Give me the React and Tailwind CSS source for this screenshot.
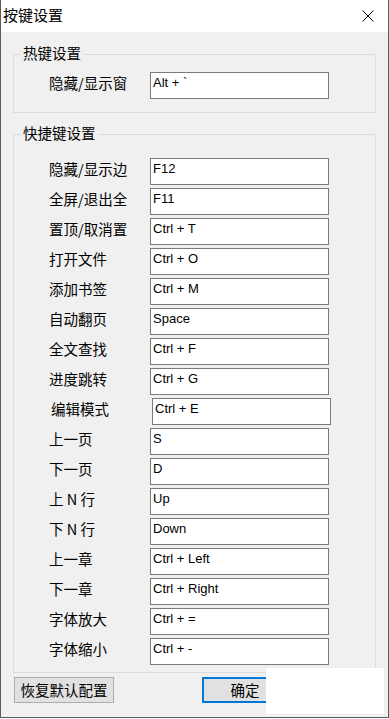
import React from "react";

const cjk = { fontFamily: '"Noto Sans CJK SC", "Noto Sans", sans-serif' };
const lat = { fontFamily: '"Liberation Sans", Arial, sans-serif' };

const rows = [
  ["隐藏/显示边", "F12"],
  ["全屏/退出全", "F11"],
  ["置顶/取消置", "Ctrl + T"],
  ["打开文件", "Ctrl + O"],
  ["添加书签", "Ctrl + M"],
  ["自动翻页", "Space"],
  ["全文查找", "Ctrl + F"],
  ["进度跳转", "Ctrl + G"],
  ["编辑模式", "Ctrl + E", true],
  ["上一页", "S"],
  ["下一页", "D"],
  ["上 N 行", "Up"],
  ["下 N 行", "Down"],
  ["上一章", "Ctrl + Left"],
  ["下一章", "Ctrl + Right"],
  ["字体放大", "Ctrl + ="],
  ["字体缩小", "Ctrl + -"],
];

function Row({ label, value, shift }) {
  return (
    <div className={`flex items-center h-[27px] ${shift ? "pl-[37px]" : "pl-[35px]"}`}>
      <div className="w-[101px] mb-[6px] text-[14.5px] leading-[20px] text-black whitespace-pre" style={cjk}>
        {label}
      </div>
      <div
        className="w-[179px] h-[27px] bg-white border border-[#7a7a7a] pl-[2px] pt-[2px] text-[13px] leading-[16px] text-black"
        style={lat}
      >
        {value}
      </div>
    </div>
  );
}

function Group({ title, children, className }) {
  return (
    <div className={`relative border border-[#dcdcdc] ${className}`}>
      <span
        className="absolute left-[7px] top-[-12px] px-[2px] bg-[#f0f0f0] text-[14.5px] leading-[20px] text-black"
        style={cjk}
      >
        {title}
      </span>
      {children}
    </div>
  );
}

export default function App() {
  return (
    <div className="w-[389px] h-[719px] bg-white relative overflow-hidden">
      <div className="h-[718px] border-x border-b border-[#5c5c5c] bg-[#f0f0f0] flex flex-col">
        <div className="h-[32px] bg-white flex items-center justify-between pl-[2px] pr-[14px]">
          <span className="text-[15px] leading-[20px] text-black mb-[2px]" style={cjk}>
            按键设置
          </span>
          <svg width="12" height="12" viewBox="0 0 12 12">
            <path d="M0.5 0.5 L11.5 11.5 M11.5 0.5 L0.5 11.5" stroke="#000" strokeWidth="1" fill="none" />
          </svg>
        </div>
        <div className="px-[12px] pt-[22px]">
          <Group title="热键设置" className="pt-[17px] pb-[13px]">
            <Row label="隐藏/显示窗" value="Alt + `" />
          </Group>
          <Group title="快捷键设置" className="mt-[21px] pt-[23px] pb-[7px]">
            <div className="flex flex-col gap-[3px]">
              {rows.map(([l, v, s]) => (
                <Row key={l} label={l} value={v} shift={s} />
              ))}
            </div>
          </Group>
          <div className="flex mt-[4px] pl-[1px]">
            <button
              className="w-[100px] h-[26px] bg-[#e1e1e1] border border-[#adadad] text-[14.5px] leading-[20px] text-black"
              style={cjk}
            >
              恢复默认配置
            </button>
            <button
              className="ml-[88px] w-[86px] h-[26px] bg-[#e1e1e1] border-2 border-[#0078d7] text-[14.5px] leading-[20px] text-black"
              style={cjk}
            >
              确定
            </button>
          </div>
        </div>
      </div>
      <div className="absolute left-[266px] top-[668px] w-[118px] h-[46px] bg-white" />
    </div>
  );
}
